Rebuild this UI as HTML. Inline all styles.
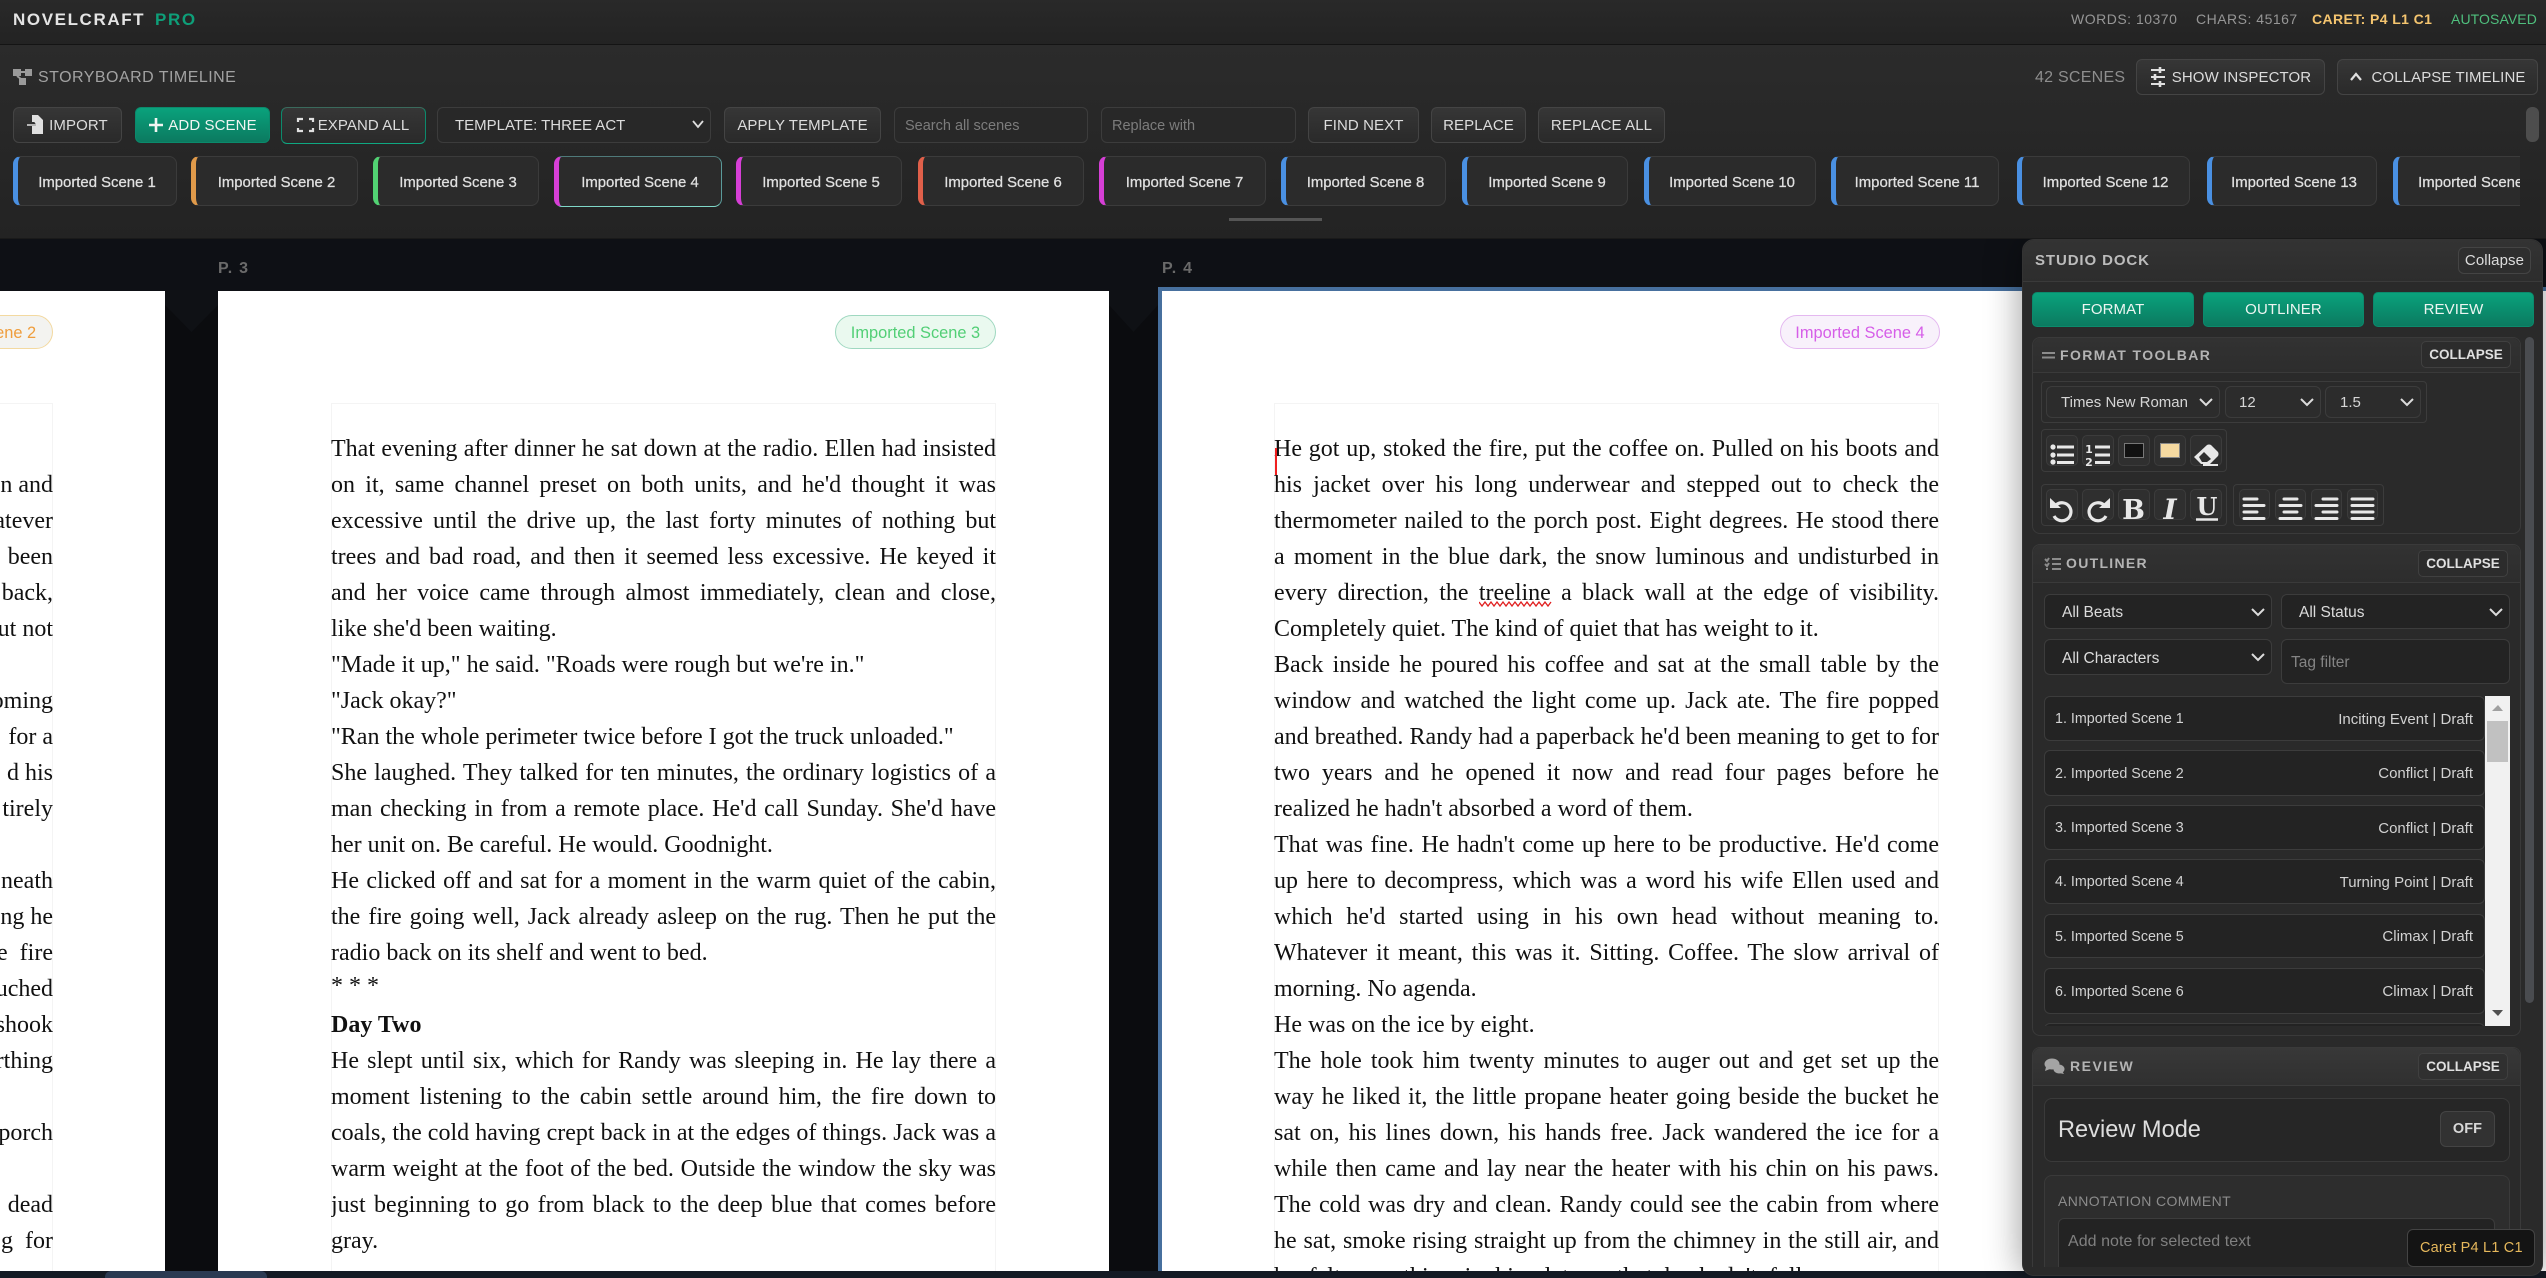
<!DOCTYPE html>
<html><head><meta charset="utf-8"><style>
html,body{margin:0;padding:0;width:2546px;height:1278px;overflow:hidden;background:#0e1015}
body{position:relative;font-family:"Liberation Sans",Arial,sans-serif;color:#ddd}
.a{position:absolute;box-sizing:border-box}
.t{position:absolute;white-space:nowrap;line-height:1}
.btn{position:absolute;box-sizing:border-box;display:flex;align-items:center;justify-content:center;white-space:nowrap;background:linear-gradient(#363636,#2a2a2a);border:1px solid #444;border-radius:6px;color:#dcdcdc;font-size:15px;letter-spacing:.1px}
.inp{position:absolute;box-sizing:border-box;background:#262626;border:1px solid #3c3c3c;border-radius:6px;color:#dcdcdc;font-size:15px;display:flex;align-items:center;white-space:nowrap}
.card{position:absolute;top:156px;height:50px;padding-top:3px;box-sizing:border-box;background:#2b2b2b;border:1px solid #3b3b3b;border-left:5px solid #4a90e2;border-radius:8px;display:flex;align-items:center;justify-content:center;font-size:14.9px;color:#e0e0e0;white-space:nowrap;overflow:hidden;-webkit-text-stroke:.25px #e0e0e0}
.page{position:absolute;top:291px;height:980px;background:#fff;overflow:hidden}
.ed{position:absolute;top:112px;height:900px;border:1px solid #f4f4f4;box-sizing:border-box}
.l{position:absolute;width:665px;height:36px;line-height:36px;overflow:hidden;font:24px/36px "Liberation Serif","Times New Roman",serif;color:#111;text-align:justify;text-align-last:justify}
.e{text-align-last:left}
.f{position:absolute;left:-200px;width:253px;text-align:right;white-space:nowrap;font:24px/36px "Liberation Serif","Times New Roman",serif;color:#111}
.pill{position:absolute;top:24px;height:34px;padding-top:3px;box-sizing:border-box;border-radius:17px;border:1px solid;display:flex;align-items:center;justify-content:center;font-size:16.4px;white-space:nowrap}
.sh{position:absolute;left:0;top:0;right:0;background:linear-gradient(#343434,#2e2e2e);border-bottom:1px solid #3a3a3a}
.col{position:absolute;box-sizing:border-box;height:27px;width:90px;display:flex;align-items:center;justify-content:center;background:#2c2c2c;border:1px solid #404040;border-radius:5px;font-size:13.5px;font-weight:bold;color:#e0e0e0}
.title{position:absolute;font-size:14px;font-weight:bold;color:#b4b4b4;letter-spacing:.6px;white-space:nowrap;line-height:1}
.grp{position:absolute;box-sizing:border-box;border:1px solid #3c3c3c;border-radius:4px}
.ib{position:absolute;box-sizing:border-box;background:#2f2f2f;border:1px solid #3c3c3c;border-radius:5px}
.it{position:absolute;left:2044px;width:441px;box-sizing:border-box;background:#232323;border:1px solid #3c3c3c;border-radius:6px;display:flex;align-items:center;justify-content:space-between;padding:1px 11px 0 10px;font-size:15px;color:#d2d2d2;white-space:nowrap}
.it span:first-child{font-size:14.3px}
</style></head><body>

<!-- workspace -->
<div class="a" style="left:0;top:238px;width:2546px;height:1040px;background:#0e1015"></div>
<div class="a" style="left:165px;top:290px;width:53px;height:981px;background:#0b0c0f"></div>
<div class="a" style="left:1109px;top:290px;width:49px;height:981px;background:#0b0c0f"></div>
<div class="a" style="left:165px;top:290px;width:53px;height:42px;background:#0f1115;clip-path:polygon(0 0,100% 0,100% 36%,50% 100%,0 36%)"></div>
<div class="a" style="left:1109px;top:290px;width:49px;height:42px;background:#0f1115;clip-path:polygon(0 0,100% 0,100% 36%,50% 100%,0 36%)"></div>
<div class="t" style="left:218px;top:261px;font-size:16px;font-weight:bold;color:#6a6a6a;letter-spacing:1.2px">P. 3</div>
<div class="t" style="left:1162px;top:261px;font-size:16px;font-weight:bold;color:#6a6a6a;letter-spacing:1.2px">P. 4</div>

<!-- left page -->
<div class="page" style="left:0;width:165px">
 <div class="pill" style="left:-110px;width:163px;background:#f3f3f0;border-color:#f3d9a0;color:#ef9d3c">Imported Scene 2</div>
 <div class="ed" style="left:-300px;width:353px"></div>
 <div class="f" style="top:176px">n and</div><div class="f" style="top:212px">atever</div><div class="f" style="top:248px">been</div><div class="f" style="top:284px">back,</div><div class="f" style="top:320px">ut not</div>
 <div class="f" style="top:392px">oming</div><div class="f" style="top:428px">for a</div><div class="f" style="top:464px">d his</div><div class="f" style="top:500px">tirely</div>
 <div class="f" style="top:572px">neath</div><div class="f" style="top:608px">ng he</div><div class="f" style="top:644px">e&nbsp;&nbsp;fire</div><div class="f" style="top:680px">uched</div><div class="f" style="top:716px">shook</div><div class="f" style="top:752px">rthing</div>
 <div class="f" style="top:824px">porch</div><div class="f" style="top:896px">dead</div><div class="f" style="top:932px">g&nbsp;&nbsp;for</div>
</div>

<!-- page 3 -->
<div class="page" style="left:218px;width:891px">
 <div class="pill" style="left:617px;width:161px;background:#eaf9ef;border-color:#9fd8c0;color:#52cf76">Imported Scene 3</div>
 <div class="ed" style="left:113px;width:665px"></div>
 <div style="position:absolute;left:113px;top:140px">
 <div class="l" style="top:0">That evening after dinner he sat down at the radio. Ellen had insisted</div>
 <div class="l" style="top:36px">on it, same channel preset on both units, and he'd thought it was</div>
 <div class="l" style="top:72px">excessive until the drive up, the last forty minutes of nothing but</div>
 <div class="l" style="top:108px">trees and bad road, and then it seemed less excessive. He keyed it</div>
 <div class="l" style="top:144px">and her voice came through almost immediately, clean and close,</div>
 <div class="l e" style="top:180px">like she'd been waiting.</div>
 <div class="l e" style="top:216px">"Made it up," he said. "Roads were rough but we're in."</div>
 <div class="l e" style="top:252px">"Jack okay?"</div>
 <div class="l e" style="top:288px">"Ran the whole perimeter twice before I got the truck unloaded."</div>
 <div class="l" style="top:324px">She laughed. They talked for ten minutes, the ordinary logistics of a</div>
 <div class="l" style="top:360px">man checking in from a remote place. He'd call Sunday. She'd have</div>
 <div class="l e" style="top:396px">her unit on. Be careful. He would. Goodnight.</div>
 <div class="l" style="top:432px">He clicked off and sat for a moment in the warm quiet of the cabin,</div>
 <div class="l" style="top:468px">the fire going well, Jack already asleep on the rug. Then he put the</div>
 <div class="l e" style="top:504px">radio back on its shelf and went to bed.</div>
 <div class="l e" style="top:537px">* * *</div>
 <div class="l e" style="top:576px;font-weight:bold">Day Two</div>
 <div class="l" style="top:612px">He slept until six, which for Randy was sleeping in. He lay there a</div>
 <div class="l" style="top:648px">moment listening to the cabin settle around him, the fire down to</div>
 <div class="l" style="top:684px">coals, the cold having crept back in at the edges of things. Jack was a</div>
 <div class="l" style="top:720px">warm weight at the foot of the bed. Outside the window the sky was</div>
 <div class="l" style="top:756px">just beginning to go from black to the deep blue that comes before</div>
 <div class="l e" style="top:792px">gray.</div>
 </div>
</div>

<!-- page 4 -->
<div class="a" style="left:1158px;top:287px;width:1400px;height:991px;background:#47709e"></div>
<div class="page" style="left:1162px;top:291px;width:1390px;height:980px">
 <div class="pill" style="left:618px;top:24px;width:160px;background:#f8f1fb;border-color:#e4b8f0;color:#d65ee8">Imported Scene 4</div>
 <div class="ed" style="left:112px;top:112px;width:665px"></div>
 <div style="position:absolute;left:112px;top:140px">
 <div class="l" style="top:0">He got up, stoked the fire, put the coffee on. Pulled on his boots and</div>
 <div class="l" style="top:36px">his jacket over his long underwear and stepped out to check the</div>
 <div class="l" style="top:72px">thermometer nailed to the porch post. Eight degrees. He stood there</div>
 <div class="l" style="top:108px">a moment in the blue dark, the snow luminous and undisturbed in</div>
 <div class="l" style="top:144px">every direction, the treeline a black wall at the edge of visibility.</div>
 <div class="l e" style="top:180px">Completely quiet. The kind of quiet that has weight to it.</div>
 <div class="l" style="top:216px">Back inside he poured his coffee and sat at the small table by the</div>
 <div class="l" style="top:252px">window and watched the light come up. Jack ate. The fire popped</div>
 <div class="l" style="top:288px">and breathed. Randy had a paperback he'd been meaning to get to for</div>
 <div class="l" style="top:324px">two years and he opened it now and read four pages before he</div>
 <div class="l e" style="top:360px">realized he hadn't absorbed a word of them.</div>
 <div class="l" style="top:396px">That was fine. He hadn't come up here to be productive. He'd come</div>
 <div class="l" style="top:432px">up here to decompress, which was a word his wife Ellen used and</div>
 <div class="l" style="top:468px">which he'd started using in his own head without meaning to.</div>
 <div class="l" style="top:504px">Whatever it meant, this was it. Sitting. Coffee. The slow arrival of</div>
 <div class="l e" style="top:540px">morning. No agenda.</div>
 <div class="l e" style="top:576px">He was on the ice by eight.</div>
 <div class="l" style="top:612px">The hole took him twenty minutes to auger out and get set up the</div>
 <div class="l" style="top:648px">way he liked it, the little propane heater going beside the bucket he</div>
 <div class="l" style="top:684px">sat on, his lines down, his hands free. Jack wandered the ice for a</div>
 <div class="l" style="top:720px">while then came and lay near the heater with his chin on his paws.</div>
 <div class="l" style="top:756px">The cold was dry and clean. Randy could see the cabin from where</div>
 <div class="l" style="top:792px">he sat, smoke rising straight up from the chimney in the still air, and</div>
 <div class="l e" style="top:828px;word-spacing:6px">he felt something in him let go that he hadn't fully</div>
 </div>
 <div class="a" style="left:113px;top:157px;width:2px;height:27px;background:#f02020"></div>
 <svg class="a" style="left:317px;top:310px" width="74" height="7"><polyline fill="none" stroke="#e02020" stroke-width="1.3" points="0,1 3,5 6,1 9,5 12,1 15,5 18,1 21,5 24,1 27,5 30,1 33,5 36,1 39,5 42,1 45,5 48,1 51,5 54,1 57,5 60,1 63,5 66,1 69,5 72,1"/></svg>
</div>

<!-- bottom bar -->
<div class="a" style="left:0;top:1271px;width:2546px;height:7px;background:#141a24"></div>
<div class="a" style="left:105px;top:1271px;width:162px;height:7px;background:#2b3a52;border-radius:6px 6px 0 0"></div>

<!-- top bar -->
<div class="a" style="left:0;top:0;width:2546px;height:45px;background:linear-gradient(#292929,#232323);border-bottom:1px solid #141414;z-index:5"></div>
<!-- timeline -->
<div class="a" style="left:0;top:45px;width:2546px;height:193px;background:linear-gradient(#2b2b2b,#232323);z-index:5"></div>
<div class="a" style="left:0;top:238px;width:2546px;height:1px;background:#1a1a1a;z-index:5"></div>

<div style="position:absolute;left:0;top:0;width:2546px;height:238px;z-index:6">
 <div class="t" style="left:13px;top:11px;font-size:17px;font-weight:bold;letter-spacing:1.6px;color:#e4e4e4">NOVELCRAFT</div>
 <div class="t" style="left:155px;top:11px;font-size:17px;font-weight:bold;letter-spacing:1.6px;color:#0e9f79">PRO</div>
 <div class="t" style="left:2071px;top:12px;font-size:14px;letter-spacing:.5px;color:#969696">WORDS: 10370</div>
 <div class="t" style="left:2196px;top:12px;font-size:14px;letter-spacing:.5px;color:#969696">CHARS: 45167</div>
 <div class="t" style="left:2312px;top:12px;font-size:14px;font-weight:bold;letter-spacing:.4px;color:#f5c56f">CARET: P4 L1 C1</div>
 <div class="t" style="left:2451px;top:12px;font-size:14px;letter-spacing:.1px;color:#4fbf7d">AUTOSAVED</div>

 <div class="t" style="left:38px;top:70px;font-size:16px;letter-spacing:.47px;color:#a2a2a2">STORYBOARD TIMELINE</div>
 <div class="t" style="left:2035px;top:70px;font-size:16px;letter-spacing:.25px;color:#8e8e8e">42 SCENES</div>
 <div class="btn" style="left:2136px;top:59px;width:189px;height:36px;padding-left:22px">SHOW INSPECTOR</div>
 <div class="btn" style="left:2337px;top:59px;width:201px;height:36px;padding-left:22px">COLLAPSE TIMELINE</div>

 <div class="btn" style="left:13px;top:107px;width:109px;height:36px;padding-left:22px">IMPORT</div>
 <div class="btn" style="left:135px;top:107px;width:135px;height:36px;padding-left:20px;background:linear-gradient(#0aa27c,#0b7a60);border-color:#0b8a6c;color:#f0f5f2">ADD SCENE</div>
 <div class="btn" style="left:281px;top:107px;width:145px;height:37px;padding-left:20px;border-color:#3a6a5c #0c8a6c #0fa882">EXPAND ALL</div>
 <div class="inp" style="left:437px;top:107px;width:274px;height:36px;padding:1px 0 0 17px;background:#282828">TEMPLATE: THREE ACT</div>
 <div class="btn" style="left:724px;top:107px;width:157px;height:36px">APPLY TEMPLATE</div>
 <div class="inp" style="left:894px;top:107px;width:194px;height:36px;padding:1px 0 0 10px;font-size:14.5px;color:#7c7c7c;background:#282828">Search all scenes</div>
 <div class="inp" style="left:1101px;top:107px;width:195px;height:36px;padding:1px 0 0 10px;font-size:14.5px;color:#7c7c7c;background:#282828">Replace with</div>
 <div class="btn" style="left:1308px;top:107px;width:111px;height:36px">FIND NEXT</div>
 <div class="btn" style="left:1431px;top:107px;width:95px;height:36px">REPLACE</div>
 <div class="btn" style="left:1538px;top:107px;width:127px;height:36px">REPLACE ALL</div>
 <div class="a" style="left:2526px;top:107px;width:13px;height:35px;background:#4d4d4d;border-radius:6px"></div>

 <div style="position:absolute;left:0;top:0;width:2520px;height:238px;overflow:hidden">
 <div class="card" style="left:13px;width:164px">Imported Scene 1</div>
 <div class="card" style="left:191px;width:167px;border-left-color:#e09a4a">Imported Scene 2</div>
 <div class="card" style="left:373px;width:166px;border-left-color:#52d273">Imported Scene 3</div>
 <div class="card" style="left:554px;width:168px;height:51px;border-color:#4f7a7a #5a9a9a #7fd8c8 #d63fd6">Imported Scene 4</div>
 <div class="card" style="left:736px;width:166px;border-left-color:#d63fd6">Imported Scene 5</div>
 <div class="card" style="left:918px;width:166px;border-left-color:#e0604a">Imported Scene 6</div>
 <div class="card" style="left:1099px;width:167px;border-left-color:#d63fd6">Imported Scene 7</div>
 <div class="card" style="left:1281px;width:165px">Imported Scene 8</div>
 <div class="card" style="left:1462px;width:166px">Imported Scene 9</div>
 <div class="card" style="left:1644px;width:172px">Imported Scene 10</div>
 <div class="card" style="left:1831px;width:168px">Imported Scene 11</div>
 <div class="card" style="left:2017px;width:173px">Imported Scene 12</div>
 <div class="card" style="left:2207px;width:170px">Imported Scene 13</div>
 <div class="card" style="left:2393px;width:172px">Imported Scene 14</div>
 </div>
 <div class="a" style="left:1229px;top:218px;width:93px;height:3px;background:#555"></div>

 <svg class="a" style="left:0;top:0" width="2546" height="238" fill="none">
  <g fill="#9a9a9a"><rect x="13" y="69" width="8" height="7"/><rect x="25" y="69" width="7" height="7"/><rect x="19" y="78" width="7" height="7"/><path d="M21 72h4M17 76l4 3" stroke="#9a9a9a" stroke-width="2"/></g>
  <path d="M32 115h6l5 5v14H32v-8h4v-4h-4z" fill="#e0e0e0"/><path d="M27 125h11m-3-3l3 3-3 3" stroke="#e0e0e0" stroke-width="1.6"/>
  <path d="M156 118v14M149 125h14" stroke="#f0f5f2" stroke-width="2.6"/>
  <path d="M298 122v-3h5M309 119h4v3M313 128v3h-4M303 131h-5v-3" stroke="#e0e0e0" stroke-width="2.2"/>
  <path d="M693 121l5 6 5-6" stroke="#ddd" stroke-width="1.8"/>
  <path d="M2151 70h14M2151 77h14M2151 84h14" stroke="#e0e0e0" stroke-width="2"/><path d="M2160 67v6M2155 74v6M2160 81v6" stroke="#e0e0e0" stroke-width="2.6"/>
  <path d="M2351 80l5-6 5 6" stroke="#e0e0e0" stroke-width="2.2"/>
 </svg>
</div>

<!-- dock -->
<div class="a" style="left:2022px;top:239px;width:521px;height:1037px;background:#2a2a2a;border:1px solid #333;border-radius:12px;box-shadow:0 0 36px rgba(0,0,0,.4);z-index:3;overflow:hidden"></div>
<div style="position:absolute;left:0;top:0;width:2546px;height:1278px;z-index:4;pointer-events:none">
 <div class="a" style="left:2023px;top:240px;width:519px;height:42px;background:linear-gradient(#333,#2d2d2d);border-bottom:1px solid #3a3a3a;border-radius:12px 12px 0 0"></div>
 <div class="t" style="left:2035px;top:253px;font-size:15px;font-weight:bold;letter-spacing:.9px;color:#bcbcbc">STUDIO DOCK</div>
 <div class="btn" style="left:2458px;top:247px;width:73px;height:27px;font-size:15px;background:#2e2e2e">Collapse</div>
 <div class="btn" style="left:2032px;top:292px;width:162px;height:35px;background:linear-gradient(#0aa27c,#0b7a60);border-color:#0b8a6c;color:#ecf5f1;border-radius:5px">FORMAT</div>
 <div class="btn" style="left:2203px;top:292px;width:161px;height:35px;background:linear-gradient(#0aa27c,#0b7a60);border-color:#0b8a6c;color:#ecf5f1;border-radius:5px">OUTLINER</div>
 <div class="btn" style="left:2373px;top:292px;width:161px;height:35px;background:linear-gradient(#0aa27c,#0b7a60);border-color:#0b8a6c;color:#ecf5f1;border-radius:5px">REVIEW</div>
 <div class="a" style="left:2525px;top:337px;width:9px;height:666px;background:#4a4c50;border-radius:5px"></div>

 <!-- format -->
 <div class="a" style="left:2032px;top:337px;width:489px;height:197px;border:1px solid #3a3a3a;border-radius:8px;background:#2a2a2a"></div>
 <div class="a" style="left:2033px;top:338px;width:487px;height:35px;background:linear-gradient(#323232,#2d2d2d);border-bottom:1px solid #3a3a3a;border-radius:8px 8px 0 0"></div>
 <div class="title" style="left:2060px;top:348px;letter-spacing:1.4px">FORMAT TOOLBAR</div>
 <div class="col" style="left:2421px;top:341px">COLLAPSE</div>
 <div class="grp" style="left:2041px;top:381px;width:386px;height:42px"></div>
 <div class="inp" style="left:2046px;top:386px;width:174px;height:32px;padding:1px 0 0 14px;background:#2c2c2c;color:#d6d6d6">Times New Roman</div>
 <div class="inp" style="left:2225px;top:386px;width:96px;height:32px;padding:1px 0 0 13px;background:#2c2c2c;color:#d6d6d6">12</div>
 <div class="inp" style="left:2325px;top:386px;width:96px;height:32px;padding:1px 0 0 14px;background:#2c2c2c;color:#d6d6d6">1.5</div>
 <div class="grp" style="left:2041px;top:429px;width:186px;height:43px"></div>
 <div class="ib" style="left:2046px;top:435px;width:32px;height:31px"></div>
 <div class="ib" style="left:2082px;top:435px;width:32px;height:31px"></div>
 <div class="ib" style="left:2118px;top:435px;width:32px;height:31px"></div>
 <div class="ib" style="left:2154px;top:435px;width:32px;height:31px"></div>
 <div class="ib" style="left:2190px;top:435px;width:32px;height:31px"></div>
 <div class="a" style="left:2124px;top:443px;width:20px;height:15px;background:#111;border:1px solid #777"></div>
 <div class="a" style="left:2160px;top:443px;width:20px;height:15px;background:#f5d9a0;border:1px solid #888"></div>
 <div class="grp" style="left:2041px;top:484px;width:186px;height:42px"></div>
 <div class="ib" style="left:2046px;top:489px;width:32px;height:31px"></div>
 <div class="ib" style="left:2082px;top:489px;width:32px;height:31px"></div>
 <div class="ib" style="left:2118px;top:489px;width:32px;height:31px"></div>
 <div class="ib" style="left:2154px;top:489px;width:32px;height:31px"></div>
 <div class="ib" style="left:2190px;top:489px;width:32px;height:31px"></div>
 <div class="grp" style="left:2233px;top:484px;width:151px;height:42px"></div>
 <div class="ib" style="left:2239px;top:489px;width:31px;height:31px"></div>
 <div class="ib" style="left:2275px;top:489px;width:31px;height:31px"></div>
 <div class="ib" style="left:2311px;top:489px;width:31px;height:31px"></div>
 <div class="ib" style="left:2347px;top:489px;width:31px;height:31px"></div>

 <!-- outliner -->
 <div class="a" style="left:2032px;top:544px;width:489px;height:492px;border:1px solid #3a3a3a;border-radius:8px;background:#2a2a2a"></div>
 <div class="a" style="left:2033px;top:545px;width:487px;height:38px;background:linear-gradient(#323232,#2d2d2d);border-bottom:1px solid #3a3a3a;border-radius:8px 8px 0 0"></div>
 <div class="title" style="left:2066px;top:556px;letter-spacing:1.3px">OUTLINER</div>
 <div class="col" style="left:2418px;top:550px">COLLAPSE</div>
 <div class="inp" style="left:2044px;top:594px;width:228px;height:35px;padding:3px 0 0 17px;background:#232323;font-size:15.5px">All Beats</div>
 <div class="inp" style="left:2281px;top:594px;width:229px;height:35px;padding:3px 0 0 17px;background:#232323;font-size:15.5px">All Status</div>
 <div class="inp" style="left:2044px;top:639px;width:228px;height:36px;padding:3px 0 0 17px;background:#232323;font-size:15.5px">All Characters</div>
 <div class="inp" style="left:2281px;top:639px;width:229px;height:45px;padding:3px 0 0 9px;background:#232323;font-size:15.5px;color:#848484">Tag filter</div>

 <div style="position:absolute;left:0;top:696px;width:2546px;height:330px;overflow:hidden">
  <div class="it" style="top:0;height:45px"><span>1. Imported Scene 1</span><span>Inciting Event | Draft</span></div>
  <div class="it" style="top:54px;height:46px"><span>2. Imported Scene 2</span><span>Conflict | Draft</span></div>
  <div class="it" style="top:109px;height:45px"><span>3. Imported Scene 3</span><span>Conflict | Draft</span></div>
  <div class="it" style="top:163px;height:45px"><span>4. Imported Scene 4</span><span>Turning Point | Draft</span></div>
  <div class="it" style="top:218px;height:44px"><span>5. Imported Scene 5</span><span>Climax | Draft</span></div>
  <div class="it" style="top:272px;height:46px"><span>6. Imported Scene 6</span><span>Climax | Draft</span></div>
  <div class="it" style="top:327px;height:45px"><span>7. Imported Scene 7</span><span>Climax | Draft</span></div>
 </div>
 <div class="a" style="left:2485px;top:696px;width:25px;height:330px;background:#f1f1f1"></div>
 <div class="a" style="left:2487px;top:721px;width:21px;height:41px;background:#c1c1c1"></div>

 <!-- review -->
 <div class="a" style="left:2032px;top:1047px;width:489px;height:220px;border:1px solid #3a3a3a;border-bottom:0;border-radius:8px 8px 0 0;background:#2a2a2a"></div>
 <div class="a" style="left:2033px;top:1048px;width:487px;height:38px;background:linear-gradient(#383838,#303030);border-bottom:1px solid #3c3c3c;border-radius:8px 8px 0 0"></div>
 <div class="title" style="left:2070px;top:1059px;letter-spacing:1.5px">REVIEW</div>
 <div class="col" style="left:2418px;top:1053px;background:#303030">COLLAPSE</div>
 <div class="a" style="left:2044px;top:1098px;width:466px;height:64px;border:1px solid #3a3a3a;border-radius:8px;background:#262626"></div>
 <div class="t" style="left:2058px;top:1119px;font-size:23.6px;color:#dedede">Review Mode</div>
 <div class="btn" style="left:2440px;top:1111px;width:55px;height:36px;font-size:14.5px;background:#323232;font-weight:bold;color:#d8d8d8">OFF</div>
 <div class="a" style="left:2044px;top:1175px;width:466px;height:92px;border:1px solid #3a3a3a;border-bottom:0;border-radius:8px 8px 0 0;background:#2d2d2d"></div>
 <div class="t" style="left:2058px;top:1194px;font-size:14px;letter-spacing:.4px;color:#8c8c8c">ANNOTATION COMMENT</div>
 <div class="a" style="left:2058px;top:1218px;width:437px;height:49px;border:1px solid #3c3c3c;border-bottom:0;border-radius:6px 6px 0 0;background:#232323"></div>
 <div class="t" style="left:2068px;top:1234px;font-size:16px;letter-spacing:.05px;color:#808080">Add note for selected text</div>

 <div class="a" style="left:2407px;top:1229px;width:128px;height:38px;background:#141414;border:1px solid #444;border-radius:6px"></div>
 <div class="t" style="left:2420px;top:1241px;font-size:14.5px;letter-spacing:.2px;color:#e6b85c">Caret P4 L1 C1</div>

 <svg class="a" style="left:0;top:0" width="2546" height="1278" fill="none">
  <g stroke="#dcdcdc" stroke-width="2">
   <path d="M2200 399l6 6 6-6M2301 399l6 6 6-6M2401 399l6 6 6-6"/>
   <path d="M2252 609l6 6 6-6M2490 609l6 6 6-6M2252 654l6 6 6-6"/>
  </g>
  <path d="M2042 353h13M2042 357.500h13" stroke="#8c8c8c" stroke-width="2"/>
  <g stroke="#8c8c8c" stroke-width="2"><path d="M2052 559h9M2052 564h9M2052 569h9"/><path d="M2045 559l2 2 2-3M2045 564l2 2 2-3M2046 569h2"/></g>
  <g fill="#a4a4a4"><ellipse cx="2052" cy="1064" rx="7.500" ry="5.500"/><path d="M2046 1067l-1 4 5-2z"/><ellipse cx="2059" cy="1069" rx="5.500" ry="4.500"/><path d="M2062 1071l2 3-5-1z"/></g>
  <g fill="#e8e8e8"><circle cx="2053" cy="447" r="2.600"/><circle cx="2053" cy="455" r="2.600"/><circle cx="2053" cy="462" r="2.600"/></g>
  <path d="M2057 447h17M2057 455h17M2057 462.500h17M2095 447h15M2095 455h15M2095 462.500h15" stroke="#e8e8e8" stroke-width="3"/>
  <text x="2089" y="453" text-anchor="middle" font-family="DejaVu Sans" font-weight="bold" font-size="11" fill="#e8e8e8">1</text>
  <text x="2089" y="466" text-anchor="middle" font-family="DejaVu Sans" font-weight="bold" font-size="11" fill="#e8e8e8">2</text>
  <path d="M2194 457l13-12q2-1 4 0l7 7q1 2 0 4l-8 8h-9z" fill="#e8e8e8"/>
  <path d="M2199 457l5-5 7 7-4 3h-5z" fill="#2f2f2f"/>
  <path d="M2203 465h15" stroke="#e8e8e8" stroke-width="2"/>
  <path d="M2056 505a9 9 0 1 1 -2 11" stroke="#e8e8e8" stroke-width="3.200"/><path d="M2050 498l11 10h-11z" fill="#e8e8e8"/>
  <path d="M2104 505a9 9 0 1 0 2 11" stroke="#e8e8e8" stroke-width="3.200"/><path d="M2110 498l-11 10h11z" fill="#e8e8e8"/>
  <text x="2133.500" y="519" text-anchor="middle" font-family="DejaVu Serif" font-weight="bold" font-size="27" fill="#e8e8e8">B</text>
  <text x="2170" y="519" text-anchor="middle" font-family="DejaVu Serif" font-weight="bold" font-style="italic" font-size="28" fill="#e8e8e8">I</text>
  <text x="2207" y="515" text-anchor="middle" font-family="DejaVu Serif" font-weight="bold" font-size="24" fill="#e8e8e8">U</text>
  <path d="M2196 519.500h22" stroke="#e8e8e8" stroke-width="2.600"/>
  <g stroke="#e8e8e8" stroke-width="3" stroke-linecap="round">
   <path d="M2244 499h13M2244 505.500h20M2244 512h13M2244 518.500h20"/>
   <path d="M2284 499h13M2280 505.500h21M2284 512h13M2280 518.500h21"/>
   <path d="M2323 499h14M2316 505.500h21M2323 512h14M2316 518.500h21"/>
   <path d="M2352 499h21M2352 505.500h21M2352 512h21M2352 518.500h21"/>
  </g>
  <path d="M2498 705l5 6h-11z" fill="#a0a0a0"/>
  <path d="M2492 1010h11l-5 6z" fill="#505050"/>
 </svg>
</div>
</body></html>
